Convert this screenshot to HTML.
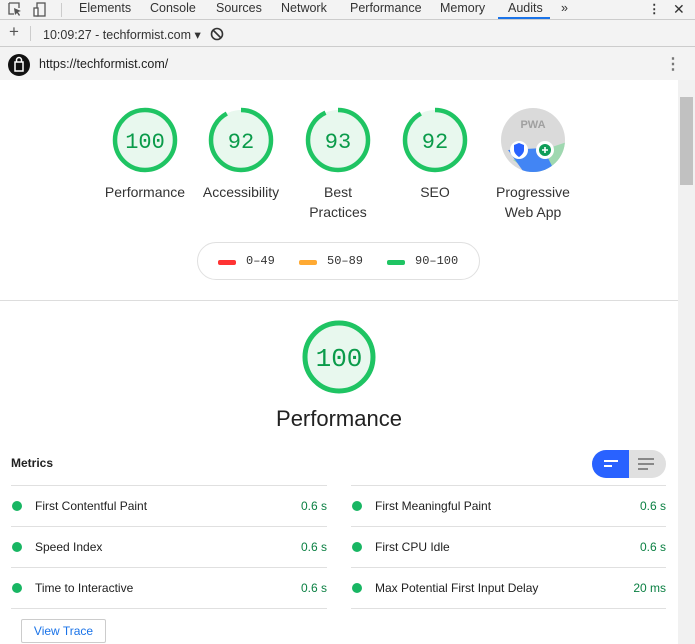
<!DOCTYPE html>
<html><head><meta charset="utf-8"><style>
*{margin:0;padding:0;box-sizing:border-box}
body{width:695px;height:644px;overflow:hidden;background:#fff;font-family:"Liberation Sans",Arial,sans-serif;position:relative;color:#212121}
.abs{position:absolute}
.tb{top:0;left:0;width:695px;height:20px;background:#f3f3f3;border-bottom:1px solid #ccc;font-size:12.5px;color:#333}
.tb span{position:absolute;top:1px}
.r2{top:20px;left:0;width:695px;height:27px;background:#f3f3f3;border-bottom:1px solid #ccc;font-size:12.5px;color:#333}
.r3{top:47px;left:0;width:695px;height:33px;background:#f3f3f3;font-size:12.5px;color:#222}
.g{position:absolute;text-align:center;width:110px;font-size:14px;color:#333;line-height:20px}
.gs{font-family:"Liberation Mono",monospace;font-size:22px;fill:#0a9b4a}
.line{position:absolute;height:1px;background:#e0e0e0}
.m{position:absolute;font-size:12px;color:#212121}
.v{position:absolute;font-size:12px;color:#0b8043;text-align:right}
.dot{position:absolute;width:10px;height:10px;border-radius:5px;background:#18b663}
</style></head><body>
<div class="abs tb">
<svg class="abs" style="left:8px;top:2px" width="14" height="15"><path d="M1 1h10v5M1 1v11h5" fill="none" stroke="#555" stroke-width="1.3"/><path d="M6 6l7 3-3 1 2 3-1 1-2-3-2 2z" fill="#555"/></svg>
<svg class="abs" style="left:33px;top:2px" width="14" height="15"><rect x="4" y="1" width="8" height="13" fill="none" stroke="#555" stroke-width="1.3"/><rect x="1" y="6" width="4" height="8" fill="#fff" stroke="#555" stroke-width="1.3"/></svg>
<div class="abs" style="left:61px;top:3px;width:1px;height:14px;background:#ccc"></div>
<span style="left:79px">Elements</span><span style="left:150px">Console</span><span style="left:216px">Sources</span><span style="left:281px">Network</span><span style="left:350px">Performance</span><span style="left:440px">Memory</span><span style="left:508px">Audits</span><span style="left:561px">»</span>
<div class="abs" style="left:498px;top:17px;width:52px;height:2px;background:#1a73e8"></div>
<span style="left:648px;font-weight:bold">⋮</span><span style="left:673px;font-size:14px">✕</span>
</div>
<div class="abs r2">
<span class="abs" style="left:9px;top:2px;font-size:17px;color:#555">+</span>
<div class="abs" style="left:30px;top:6px;width:1px;height:15px;background:#ccc"></div>
<span class="abs" style="left:43px;top:7px">10:09:27 - techformist.com ▾</span>
<svg class="abs" style="left:210px;top:7px" width="14" height="14"><circle cx="7" cy="7" r="5.5" fill="none" stroke="#333" stroke-width="1.6"/><path d="M3 3l8 8" stroke="#333" stroke-width="1.6"/></svg>
</div>
<div class="abs r3">
<div class="abs" style="left:8px;top:7px;width:22px;height:22px;border-radius:11px;background:#111"></div>
<svg class="abs" style="left:8px;top:7px" width="22" height="22"><rect x="7" y="8" width="8" height="9" fill="none" stroke="#fff" stroke-width="1.5"/><path d="M8.5 8V6a2.5 2.5 0 015 0v2" fill="none" stroke="#fff" stroke-width="1.5"/></svg>
<span class="abs" style="left:39px;top:10px">https://techformist.com/</span>
<span class="abs" style="left:665px;top:7px;font-size:16px;color:#777;font-weight:bold">⋮</span>
</div>
<div class="abs" style="left:678px;top:80px;width:17px;height:564px;background:#f1f1f1"></div>
<div class="abs" style="left:680px;top:97px;width:13px;height:88px;background:#c1c1c1"></div>

<svg class="abs" style="left:0;top:80px" width="678" height="140">
<g transform="translate(145,60)"><circle r="30" fill="#e8f8ee"/><circle r="30" fill="none" stroke="#1fc463" stroke-width="4.5"/><text class="gs" text-anchor="middle" y="8">100</text></g>
<g transform="translate(241,60)"><circle r="30" fill="#e8f8ee"/><circle r="30" fill="none" stroke="#1fc463" stroke-width="4.5" stroke-dasharray="173.4 200" transform="rotate(-90)"/><text class="gs" text-anchor="middle" y="8">92</text></g>
<g transform="translate(338,60)"><circle r="30" fill="#e8f8ee"/><circle r="30" fill="none" stroke="#1fc463" stroke-width="4.5" stroke-dasharray="175.3 200" transform="rotate(-90)"/><text class="gs" text-anchor="middle" y="8">93</text></g>
<g transform="translate(435,60)"><circle r="30" fill="#e8f8ee"/><circle r="30" fill="none" stroke="#1fc463" stroke-width="4.5" stroke-dasharray="173.4 200" transform="rotate(-90)"/><text class="gs" text-anchor="middle" y="8">92</text></g>
<g transform="translate(533,60)"><clipPath id="c"><circle r="32"/></clipPath><circle r="32" fill="#dadada"/>
<g clip-path="url(#c)"><path d="M-20 20L5 38 40 38 40 0z" fill="#9fd8b0"/><path d="M-25 10L-5 38 25 38 10 8z" fill="#4285f4"/></g>
<text x="0" y="-12" text-anchor="middle" font-size="11" font-weight="bold" fill="#a0a0a0" font-family="Liberation Sans">PWA</text>
<circle cx="-14" cy="10" r="9" fill="#fff"/><path d="M-19 5l5-2 5 2v5c0 4-5 7-5 7s-5-3-5-7z" fill="#2962ff"/>
<circle cx="12" cy="10" r="9" fill="#fff"/><circle cx="12" cy="10" r="6" fill="#0f9d58"/><path d="M9 10h6M12 7v6" stroke="#fff" stroke-width="1.6"/></g>
</svg>
<div class="g" style="left:90px;top:182px">Performance</div>
<div class="g" style="left:186px;top:182px">Accessibility</div>
<div class="g" style="left:283px;top:182px">Best<br>Practices</div>
<div class="g" style="left:380px;top:182px">SEO</div>
<div class="g" style="left:478px;top:182px">Progressive<br>Web App</div>

<div class="abs" style="left:197px;top:242px;width:283px;height:38px;border:1px solid #e0e0e0;border-radius:19px;font-family:'Liberation Mono',monospace;font-size:12px;color:#333">
<div class="abs" style="left:20px;top:17px;width:18px;height:5px;border-radius:2px;background:#f33"></div><span class="abs" style="left:48px;top:11px">0–49</span>
<div class="abs" style="left:101px;top:17px;width:18px;height:5px;border-radius:2px;background:#fa3"></div><span class="abs" style="left:129px;top:11px">50–89</span>
<div class="abs" style="left:189px;top:17px;width:18px;height:5px;border-radius:2px;background:#1fc463"></div><span class="abs" style="left:217px;top:11px">90–100</span>
</div>
<div class="line" style="left:0;top:300px;width:678px;background:#ddd"></div>

<svg class="abs" style="left:299px;top:317px" width="80" height="80"><circle cx="40" cy="40" r="34" fill="#e8f8ee"/><circle cx="40" cy="40" r="34" fill="none" stroke="#1fc463" stroke-width="5"/><text x="40" y="49" text-anchor="middle" font-family="Liberation Mono,monospace" font-size="26" fill="#0a9b4a">100</text></svg>
<div class="abs" style="left:0;width:678px;top:406px;text-align:center;font-size:22px;color:#212121">Performance</div>

<div class="abs" style="left:11px;top:456px;font-size:12px;font-weight:bold">Metrics</div>
<div class="abs" style="left:592px;top:450px;width:74px;height:28px;border-radius:14px;background:#e0e0e0;overflow:hidden"><div class="abs" style="left:0;top:0;width:37px;height:28px;background:#2962ff"></div>
<svg class="abs" style="left:10px;top:8px" width="18" height="12"><path d="M2 3h14M2 8h8" stroke="#fff" stroke-width="2"/></svg>
<svg class="abs" style="left:45px;top:7px" width="18" height="14"><path d="M1 2h16M1 7h16M1 12h10" stroke="#888" stroke-width="2"/></svg></div>

<div class="line" style="left:11px;top:485px;width:316px"></div><div class="line" style="left:351px;top:485px;width:315px"></div>
<div class="line" style="left:11px;top:526px;width:316px"></div><div class="line" style="left:351px;top:526px;width:315px"></div>
<div class="line" style="left:11px;top:567px;width:316px"></div><div class="line" style="left:351px;top:567px;width:315px"></div>
<div class="line" style="left:11px;top:608px;width:316px"></div><div class="line" style="left:351px;top:608px;width:315px"></div>

<div class="dot" style="left:12px;top:501px"></div><div class="m" style="left:35px;top:499px">First Contentful Paint</div><div class="v" style="left:260px;width:67px;top:499px">0.6 s</div>
<div class="dot" style="left:352px;top:501px"></div><div class="m" style="left:375px;top:499px">First Meaningful Paint</div><div class="v" style="left:600px;width:66px;top:499px">0.6 s</div>
<div class="dot" style="left:12px;top:542px"></div><div class="m" style="left:35px;top:540px">Speed Index</div><div class="v" style="left:260px;width:67px;top:540px">0.6 s</div>
<div class="dot" style="left:352px;top:542px"></div><div class="m" style="left:375px;top:540px">First CPU Idle</div><div class="v" style="left:600px;width:66px;top:540px">0.6 s</div>
<div class="dot" style="left:12px;top:583px"></div><div class="m" style="left:35px;top:581px">Time to Interactive</div><div class="v" style="left:260px;width:67px;top:581px">0.6 s</div>
<div class="dot" style="left:352px;top:583px"></div><div class="m" style="left:375px;top:581px">Max Potential First Input Delay</div><div class="v" style="left:600px;width:66px;top:581px">20 ms</div>

<div class="abs" style="left:21px;top:619px;width:85px;height:24px;border:1px solid #ccc;border-radius:2px;font-size:12px;color:#1a73e8;text-align:center;line-height:22px">View Trace</div>
</body></html>
